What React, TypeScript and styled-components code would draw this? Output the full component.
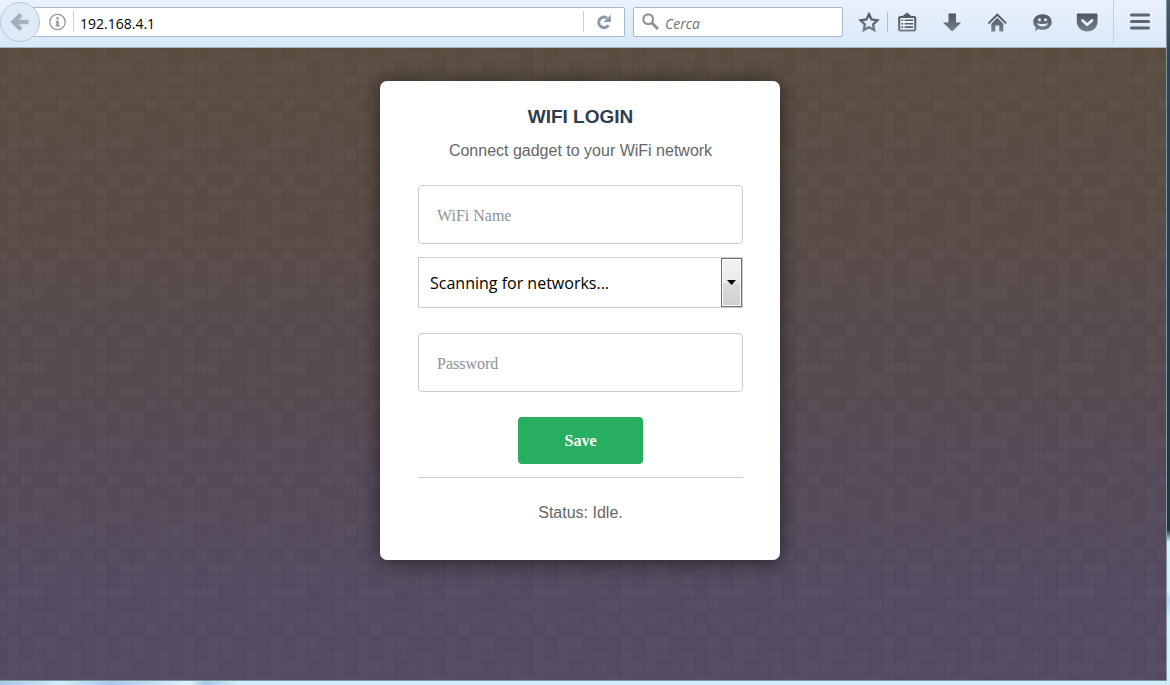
import React from 'react';
import styled, { createGlobalStyle } from 'styled-components';

const GlobalStyle = createGlobalStyle`
  *, *::before, *::after { box-sizing: border-box; }
  body { margin: 0; font-family: "Liberation Sans", Arial, sans-serif; }
  button, input, select { font: inherit; margin: 0; }
`;

const uiFont = '"Open Sans", "Noto Sans", sans-serif';
const formFont = '"Liberation Serif", "Times New Roman", serif';

const Desktop = styled.div`
  min-height: 100vh;
  display: flex;
  padding: 0 3px 4px 0;
  background:
    linear-gradient(90deg, #a9c6e6 0, #d3edfb 60px, #a9c8ea 110px, #c3dcf3 150px, #def3fc 190px, #a8c8e8 205px, #d3eefa 240px, #d3eefa 100%) left bottom / 100% 4px no-repeat,
    linear-gradient(180deg, #4d5f69 0, #2e424e 60px, #24343e 530px, #d3f0fa 542px, #d3f0fa 590px, #b4d6f2 600px, #d3f0fa 620px) right top / 3px 100% no-repeat,
    #d3eefa;
`;

const Window = styled.div`
  flex: 1;
  display: flex;
  flex-direction: column;
  border-right: 1px solid #7e99a6;
  border-bottom: 1px solid #7c939c;
`;

const Toolbar = styled.header`
  display: flex;
  align-items: center;
  height: 48px;
  padding: 0 14px 4px 0;
  border-bottom: 1px solid #a3b5c3;
  background: linear-gradient(#e9f2fb, #d9e8f8);
  font-family: ${uiFont};
  font-size: 14px;
`;

const BackButton = styled.button`
  position: relative;
  z-index: 1;
  flex: none;
  display: grid;
  place-items: center;
  width: 40px;
  height: 40px;
  padding: 0;
  border: 1px solid #b5c7db;
  border-radius: 50%;
  background: #dfeaf7;
`;

const Field = styled.form<{ $address?: boolean }>`
  display: flex;
  align-items: center;
  height: 30px;
  flex: ${p => (p.$address ? '1 1 0' : '0 1 210px')};
  min-width: 0;
  margin-left: ${p => (p.$address ? '-8px' : '8px')};
  padding-left: ${p => (p.$address ? '16px' : '8px')};
  border: 1px solid #a5b9cd;
  border-radius: 2px;
  background: #fff;
`;

const FieldInput = styled.input`
  flex: 1;
  min-width: 0;
  height: 28px;
  padding: 4px 6px 0;
  border: 0;
  outline: 0;
  background: transparent;
  color: #000;
  &::placeholder { color: #707070; font-style: italic; opacity: 1; }
`;

const PlainButton = styled.button<{ $w: number }>`
  flex: none;
  display: grid;
  place-items: center;
  width: ${p => p.$w}px;
  height: 28px;
  padding: 0;
  border: 0;
  background: none;
`;

const Rule = styled.span<{ $h: number; $color: string; $gap?: number }>`
  flex: none;
  width: 1px;
  height: ${p => p.$h}px;
  margin-left: ${p => p.$gap ?? 0}px;
  background: ${p => p.$color};
`;

const Tools = styled.nav`
  display: flex;
  align-items: center;
  margin-left: 14px;
`;

const ToolGroup = styled.div`
  display: flex;
  align-items: center;
  gap: 21px;
  margin: 0 14px 0 7px;
`;

const StarSlot = styled.div`
  display: flex;
  margin-right: 6px;
`;

const MenuSlot = styled.div`
  display: flex;
  margin-left: 14px;
`;

const Page = styled.main`
  position: relative;
  flex: 1;
  padding: 33px 6px 40px 0;
  background: linear-gradient(180deg, #5c4e41 0%, #5b4d46 22%, #594b4f 48%, #574b59 66%, #554c62 85%, #554c66 100%);
`;

const Texture = styled.svg`
  position: absolute;
  inset: 0;
  width: 100%;
  height: 100%;
`;

const Card = styled.section`
  position: relative;
  width: 400px;
  max-width: 100%;
  margin: 0 auto;
  padding: 24px 37px 36px 38px;
  border-radius: 7px;
  background: #fff;
  box-shadow: 0 2px 20px rgba(0, 0, 0, 0.55);
  text-align: center;
`;

const Title = styled.h1`
  margin: 0 0 12px;
  color: #2c3e50;
  font-size: 19px;
  line-height: 23px;
`;

const Text = styled.p`
  margin: 0;
  color: #666;
  font-size: 16px;
  line-height: 22px;
`;

const Form = styled.form`
  display: flex;
  flex-direction: column;
  margin-top: 23px;
  font-family: ${formFont};
  font-size: 16px;
`;

const TextBox = styled.input`
  width: 100%;
  height: 59px;
  padding: 2px 18px 0;
  border: 1px solid #ccc;
  border-radius: 4px;
  background: #fff;
  &::placeholder { color: #8d9299; opacity: 1; }
`;

const SelectWrap = styled.div`
  position: relative;
  margin: 13px 0 25px;
`;

const Select = styled.select`
  display: block;
  appearance: none;
  width: 100%;
  height: 51px;
  padding: 0 32px 0 11px;
  border: 1px solid #ccc;
  border-radius: 0;
  background: #fff;
  color: #000;
  font-family: ${uiFont};
  font-size: 16px;
`;

const Arrow = styled.span`
  position: absolute;
  top: 1px;
  right: 1px;
  bottom: 1px;
  display: grid;
  place-items: center;
  width: 21px;
  border: 1px solid #707070;
  background: linear-gradient(#f2f2f2, #ebebeb 50%, #dddddd 50%, #cfcfcf);
  box-shadow: inset 0 0 0 1px #fafafa;
  pointer-events: none;
`;

const Save = styled.button`
  align-self: center;
  width: 125px;
  height: 47px;
  margin: 25px 0 13px;
  border: 0;
  border-radius: 4px;
  background: #27ae60;
  color: #fff;
  font-size: 16px;
  font-weight: bold;
`;

const Status = styled.footer`
  padding-top: 24px;
  border-top: 1px solid #ccc;
`;

/* Shade of each square in the repeating 7 x 6 mosaic: 0 dark, 3 light. */
const mosaic = ['2022120', '3330120', '2010123', '2122120', '0300312', '3033001'];
const cell = 12.5;

function Mosaic() {
  return (
    <Texture aria-hidden="true">
      <defs>
        <pattern id="mosaic" x="7" y="0.5" width={cell * 7} height={cell * 6} patternUnits="userSpaceOnUse">
          {mosaic.map((row, y) =>
            row.split('').map((v, x) => (
              <g key={`${x}-${y}`}>
                <rect x={x * cell} y={y * cell} width={cell} height={cell} fill="#000" fillOpacity="0.045" />
                <rect x={x * cell + 1} y={y * cell + 1} width={cell - 1} height={cell - 1} fill="#fff" fillOpacity={0.01 + Number(v) * 0.009} />
              </g>
            )),
          )}
        </pattern>
      </defs>
      <rect width="100%" height="100%" fill="url(#mosaic)" />
    </Texture>
  );
}

const Definitions = styled.svg`
  position: absolute;
`;

const metal = 'url(#metal)';

function Icon({ size = 24, children }: { size?: number; children: React.ReactNode }) {
  return (
    <svg width={size} height={size} viewBox={`0 0 ${size} ${size}`} fill="none" aria-hidden="true">
      {children}
    </svg>
  );
}

export default function App() {
  return (
    <Desktop>
      <GlobalStyle />
      <Definitions width="0" height="0" aria-hidden="true">
        <defs>
          <linearGradient id="metal" x1="0" y1="2" x2="0" y2="22" gradientUnits="userSpaceOnUse">
            <stop offset="0" stopColor="#4a535d" />
            <stop offset="1" stopColor="#75828f" />
          </linearGradient>
        </defs>
      </Definitions>
      <Window>
        <Toolbar>
          <BackButton aria-label="Back">
            <Icon>
              <path d="M13 4.500 5.500 12l7.500 7.500M6 12h14.500" stroke="#a4b0bc" strokeWidth="4.500" />
            </Icon>
          </BackButton>
          <Field $address>
            <PlainButton type="button" $w={17} aria-label="Site information">
              <svg width="17" height="18" viewBox="0 0 17 18" aria-hidden="true">
                <circle cx="8.500" cy="9" r="7.700" fill="none" stroke="#989898" strokeWidth="1.300" />
                <path d="M7.300 4.300h2.500v2.300H7.300zM6.800 7.800h3V12h.9v1.400H6.600V12h.7V9.200h-.5z" fill="#989898" />
              </svg>
            </PlainButton>
            <Rule $h={21} $color="#d0d0d0" $gap={7} />
            <FieldInput aria-label="Address" defaultValue="192.168.4.1" />
            <Rule $h={21} $color="#d0d0d0" />
            <PlainButton type="button" $w={40} aria-label="Reload">
              <svg width="16" height="16" viewBox="0 0 16 16" aria-hidden="true">
                <path d="M12.500 11.200A5.300 5.300 0 1 1 11 4" fill="none" stroke="#8c9aa8" strokeWidth="3" />
                <path d="M14.800.8v7.200H7.600z" fill="#8c9aa8" />
              </svg>
            </PlainButton>
          </Field>
          <Field>
            <svg width="17" height="17" viewBox="0 0 17 17" fill="none" stroke="#929292" aria-hidden="true">
              <circle cx="6.200" cy="6.200" r="4.900" strokeWidth="2.200" />
              <path d="m10 10 6 6" strokeWidth="3" />
            </svg>
            <FieldInput aria-label="Search" placeholder="Cerca" />
          </Field>
          <Tools aria-label="Browser tools">
            <StarSlot>
              <PlainButton $w={24} aria-label="Bookmark">
                <Icon>
                  <path d="m12 4.300 2.500 5.200 5.900.8-4.300 4 1.100 5.800-5.200-2.800-5.200 2.800 1.100-5.800-4.300-4 5.900-.8z" stroke={metal} strokeWidth="2.300" />
                </Icon>
              </PlainButton>
            </StarSlot>
            <Rule $h={20} $color="#b4bfca" />
            <ToolGroup>
              <PlainButton $w={24} aria-label="Bookmark list">
                <Icon>
                  <path d="M7 6.500 12 2.500l5 4z" fill={metal} />
                  <rect x="4.200" y="7" width="16" height="13.500" rx="1" fill="#eef4fb" stroke={metal} strokeWidth="2.200" />
                  <path d="M6.300 10.300h1.900M9.600 10.300h8.500M6.300 13.700h1.900M9.600 13.700h8.500M6.300 17.100h1.900M9.600 17.100h8.500" stroke="#57616c" strokeWidth="1.600" />
                </Icon>
              </PlainButton>
              <PlainButton $w={24} aria-label="Downloads">
                <Icon>
                  <path d="M8.500 3.500h7.500v9h5.200L12.200 21.500 3 12.500h5.500z" fill={metal} />
                </Icon>
              </PlainButton>
              <PlainButton $w={24} aria-label="Home">
                <Icon>
                  <path d="m3.300 13.500 9-8.800 9 8.800" stroke={metal} strokeWidth="1.900" />
                  <path d="m12.300 7.800 6 5.900V21.500h-4v-6h-4v6h-4v-7.800z" fill={metal} />
                </Icon>
              </PlainButton>
              <PlainButton $w={24} aria-label="Chat">
                <Icon>
                  <path d="M12.500 4.200c5.200 0 9.200 3 9.200 7.700s-4 7.900-9.200 7.900c-1.700 0-3.100-.3-4.400-.9L5 21.200l.8-4c-1.600-1.400-2.500-3.200-2.500-5.300 0-4.700 4-7.700 9.200-7.700" fill={metal} />
                  <circle cx="9.500" cy="9.700" r="1.500" fill="#e4eef9" />
                  <circle cx="15.500" cy="9.700" r="1.500" fill="#e4eef9" />
                  <path d="M7 13c2.800 1.400 8.200 1.400 11 0-1 4.800-10 4.800-11 0" fill="#e4eef9" />
                </Icon>
              </PlainButton>
              <PlainButton $w={24} aria-label="Pocket">
                <Icon>
                  <path d="M3 3.500h18c.8 0 1.500.5 1.500 1.200V11.500c0 6-4.500 10-10.200 10S1.800 17.500 1.800 11.500V4.700c0-.7.4-1.200 1.200-1.200" fill={metal} />
                  <path d="m7.500 10.500 4.700 4.300 4.800-4.300" stroke="#e8f1fb" strokeWidth="2.700" strokeLinecap="round" strokeLinejoin="round" />
                </Icon>
              </PlainButton>
            </ToolGroup>
            <Rule $h={44} $color="#c3d2e0" />
            <MenuSlot>
              <PlainButton $w={24} aria-label="Menu">
                <Icon>
                  <path d="M3.500 5h17M3.500 11.500h17M3.500 18h17" stroke="#5a6570" strokeWidth="3.200" strokeLinecap="round" />
                </Icon>
              </PlainButton>
            </MenuSlot>
          </Tools>
        </Toolbar>
        <Page>
          <Mosaic />
          <Card>
            <Title>WIFI LOGIN</Title>
            <Text>Connect gadget to your WiFi network</Text>
            <Form>
              <TextBox aria-label="WiFi name" placeholder="WiFi Name" />
              <SelectWrap>
                <Select aria-label="Networks">
                  <option>Scanning for networks...</option>
                </Select>
                <Arrow aria-hidden="true">
                  <svg width="9" height="5" viewBox="0 0 9 5">
                    <path d="M0 0h9L4.500 5z" fill="#000" />
                  </svg>
                </Arrow>
              </SelectWrap>
              <TextBox type="password" aria-label="Password" placeholder="Password" />
              <Save type="button">Save</Save>
            </Form>
            <Status>
              <Text>Status: Idle.</Text>
            </Status>
          </Card>
        </Page>
      </Window>
    </Desktop>
  );
}
